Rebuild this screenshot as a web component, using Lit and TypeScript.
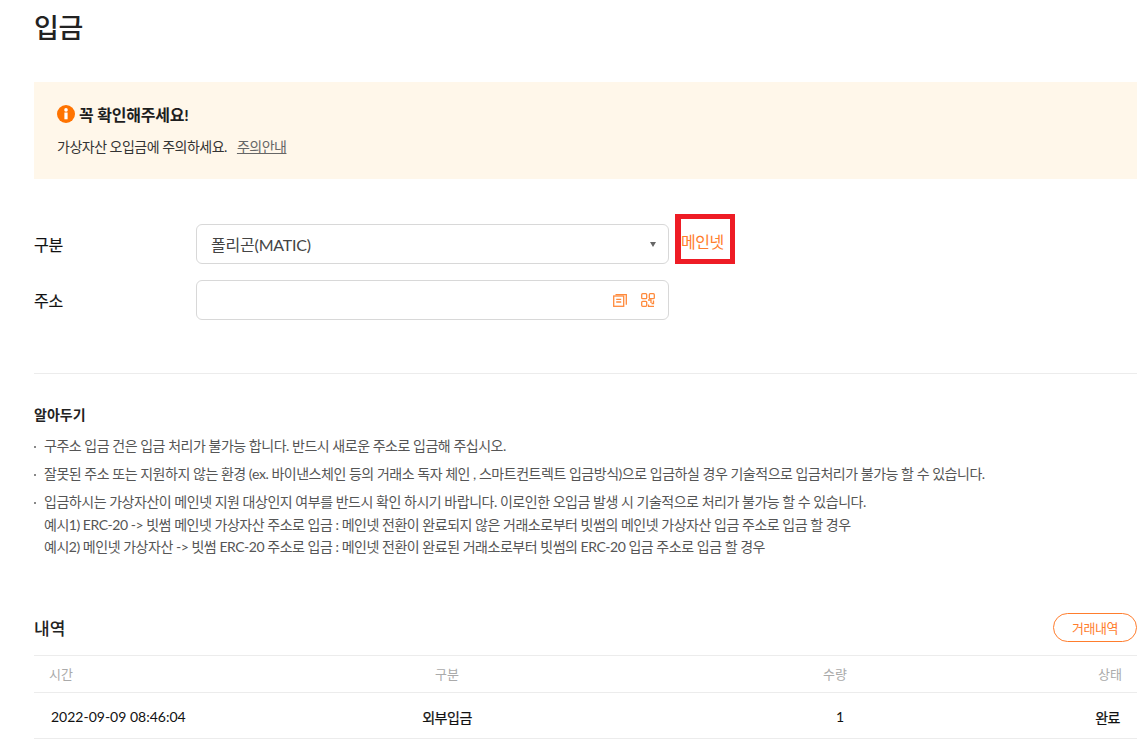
import { LitElement, html, css } from "lit";
import { customElement } from "lit/decorators.js";

@customElement("app-root")
export class AppRoot extends LitElement {
  static styles = css`
    :host { display: block; height: 748px; overflow: hidden; background: #fff; font-family: Lato, "Noto Sans CJK KR", sans-serif; color: #222; }
    .page { padding: 0 6px 0 34px; }
    h1 { margin: 0; height: 82px; font-size: 27px; font-weight: 500; line-height: 55px; letter-spacing: -0.3px; color: #222; }
    .notice { height: 97px; box-sizing: border-box; background: #fff7ea; padding: 21px 23px 0; }
    .notice-title { display: flex; align-items: center; gap: 4px; height: 22px; font-size: 16px; font-weight: 700; letter-spacing: -0.2px; color: #1e1e1e; }
    .notice-text { margin-top: 12px; font-size: 14px; line-height: 20px; letter-spacing: -0.5px; color: #333; display: flex; gap: 10px; }
    .notice-text a { color: #666; text-decoration: underline; }
    .form { margin-top: 45px; height: 149px; border-bottom: 1px solid #ececec; }
    .row { display: flex; align-items: center; height: 40px; margin-bottom: 16px; }
    .label { width: 162px; font-size: 16px; font-weight: 400; -webkit-text-stroke: 0.2px #111; letter-spacing: -0.3px; color: #111; margin-top: -1px; }
    .field { width: 473px; height: 40px; box-sizing: border-box; border: 1px solid #d8d8d8; border-radius: 6px; display: flex; align-items: center; padding: 0 14px; font-size: 16px; letter-spacing: -0.2px; color: #444; }
    .field span { flex: 1; }
    .arrow { width: 0; height: 0; border-left: 3.5px solid transparent; border-right: 3.5px solid transparent; border-top: 5px solid #666; margin-right: -2px; }
    .icons { display: flex; gap: 14px; align-items: center; margin-right: -1px; }
    .mainnet { width: 60px; height: 50px; margin-left: 6px; margin-top: -10px; box-sizing: border-box; border: 5px solid #ee1c25; border-left-width: 6px; padding-top: 4px; display: flex; align-items: center; font-size: 16px; color: #ff7d2d; letter-spacing: -0.5px; white-space: nowrap; }
    .tips { margin-top: 31px; }
    .tips h3 { margin: 0 0 10px; font-size: 14px; font-weight: 700; line-height: 20px; color: #222; }
    .tips ul { margin: 0; padding: 0; list-style: none; }
    .tips li { position: relative; padding-left: 10px; font-size: 14px; line-height: 22.5px; letter-spacing: -0.47px; color: #555; margin-bottom: 5.5px; }
    .tips li::before { content: ""; position: absolute; left: 0; top: 11px; width: 2px; height: 2px; background: #888; }
    .hist-head { margin-top: 44px; height: 50px; padding-bottom: 2px; display: flex; align-items: center; justify-content: space-between; }
    .hist-head h2 { margin: 0; font-size: 17px; font-weight: 500; color: #222; }
    .btn { width: 84px; height: 29px; box-sizing: border-box; border: 1px solid #ff7d2d; border-radius: 15px; display: flex; align-items: center; justify-content: center; font-size: 13px; letter-spacing: -0.4px; color: #ff7d2d; }
    .table { border-top: 1px solid #ececec; }
    .tr { display: grid; grid-template-columns: 263px 300px 250px 1fr; align-items: center; border-bottom: 1px solid #ececec; }
    .th { height: 36px; font-size: 13px; color: #aaa; }
    .td { height: 42px; padding-top: 3px; font-size: 14px; color: #111; }
    .c1 { padding-left: 15px; }
    .td .c1 { padding-left: 17px; }
    .c2 { text-align: center; }
    .td .c2 { -webkit-text-stroke: 0.25px #111; letter-spacing: -0.45px; }
    .c3 { text-align: right; padding-right: 0; }
    .td .c3 { padding-right: 3px; }
    .c4 { text-align: right; padding-right: 15px; }
    .td .c4 { padding-right: 17px; -webkit-text-stroke: 0.25px #111; letter-spacing: -0.45px; }
  `;

  render() {
    return html`<div class="page">
      <h1>입금</h1>
      <div class="notice">
        <div class="notice-title">
          <svg width="18" height="18" viewBox="0 0 18 18"><circle cx="9" cy="9" r="9" fill="#ff7300"/><rect x="7.4" y="7.5" width="3.2" height="6.8" fill="#fff"/><circle cx="9" cy="4.9" r="1.8" fill="#fff"/></svg>
          꼭 확인해주세요!
        </div>
        <div class="notice-text"><span>가상자산 오입금에 주의하세요.</span><a>주의안내</a></div>
      </div>
      <div class="form">
        <div class="row">
          <div class="label">구분</div>
          <div class="field"><span>폴리곤(MATIC)</span><i class="arrow"></i></div>
          <div class="mainnet">메인넷</div>
        </div>
        <div class="row">
          <div class="label">주소</div>
          <div class="field"><span></span>
            <div class="icons">
              <svg width="14" height="13" viewBox="0 0 14 13" fill="none" stroke="#ff8a3c" stroke-width="1.3"><rect x="0.7" y="2" width="10" height="10.3"/><path d="M2.5 .7h10.8v10M3.2 5.4h5M3.2 8h5" /></svg>
              <svg width="14" height="14" viewBox="0 0 14 14" fill="none" stroke="#ff8a3c" stroke-width="1.3"><rect x="0.7" y="0.7" width="5" height="5" rx="1"/><rect x="8.3" y="0.7" width="5" height="5" rx="1"/><rect x="0.7" y="8.3" width="5" height="5" rx="1"/><path d="M7 7h3v3M12.5 7.5v3h-2M7.5 11.5v2h5.5"/></svg>
            </div>
          </div>
        </div>
      </div>
      <div class="tips">
        <h3>알아두기</h3>
        <ul>
          <li>구주소 입금 건은 입금 처리가 불가능 합니다. 반드시 새로운 주소로 입금해 주십시오.</li>
          <li>잘못된 주소 또는 지원하지 않는 환경 (ex. 바이낸스체인 등의 거래소 독자 체인 , 스마트컨트렉트 입금방식)으로 입금하실 경우 기술적으로 입금처리가 불가능 할 수 있습니다.</li>
          <li>입금하시는 가상자산이 메인넷 지원 대상인지 여부를 반드시 확인 하시기 바랍니다. 이로인한 오입금 발생 시 기술적으로 처리가 불가능 할 수 있습니다.<br>예시1) ERC-20 -&gt; 빗썸 메인넷 가상자산 주소로 입금 : 메인넷 전환이 완료되지 않은 거래소로부터 빗썸의 메인넷 가상자산 입금 주소로 입금 할 경우<br>예시2) 메인넷 가상자산 -&gt; 빗썸 ERC-20 주소로 입금 : 메인넷 전환이 완료된 거래소로부터 빗썸의 ERC-20 입금 주소로 입금 할 경우</li>
        </ul>
      </div>
      <div class="hist-head"><h2>내역</h2><div class="btn">거래내역</div></div>
      <div class="table">
        <div class="tr th"><div class="c1">시간</div><div class="c2">구분</div><div class="c3">수량</div><div class="c4">상태</div></div>
        <div class="tr td"><div class="c1">2022-09-09 08:46:04</div><div class="c2">외부입금</div><div class="c3">1</div><div class="c4">완료</div></div>
      </div>
    </div>`;
  }
}
